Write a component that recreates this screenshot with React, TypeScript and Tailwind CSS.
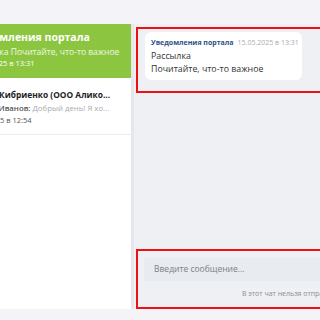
import React from "react";

const font = { fontFamily: '"Open Sans", "Noto Sans", sans-serif' };

function ChatItem({
  active,
  title,
  author,
  text,
  date,
}: {
  active?: boolean;
  title: string;
  author?: string;
  text: string;
  date: string;
}) {
  return (
    <div
      className={
        active
          ? "h-[54px] bg-[#8cc640] pl-[10px] pt-[6px]"
          : "h-[57px] border-b border-[#ececef] bg-white pl-[10px] pt-[9px]"
      }
    >
      <div
        className={
          "whitespace-nowrap font-bold leading-[15px] " +
          (active ? "text-[10.5px] text-white" : "ml-[9px] text-[8.4px] text-[#222]")
        }
      >
        {title}
      </div>
      <div
        className={
          "whitespace-nowrap leading-[13px] " +
          (active ? "ml-[4px] text-[8.5px]" : "ml-[10px] text-[7.8px]")
        }
      >
        {author ? (
          <span className="font-semibold text-[#555]">{author}: </span>
        ) : null}
        <span className={active ? "text-white/85" : "text-[#a9abb0]"}>{text}</span>
      </div>
      <div
        className={
          "whitespace-nowrap text-[7.5px] leading-[11px] " +
          (active ? "ml-[3px] text-white" : "ml-[0px] text-[#555]")
        }
      >
        {date}
      </div>
    </div>
  );
}

export default function App() {
  return (
    <div className="h-[320px] w-[320px] overflow-hidden bg-[#f3f3f8] pt-[24px]" style={font}>
      <div className="-ml-[44px] flex h-[285px] w-[420px]">
        {/* chat list */}
        <div className="w-[178px] shrink-0 overflow-hidden border-r-[3px] border-[#e6e6eb] bg-white">
          <ChatItem
            active
            title="Уведомления портала"
            text="Рассылка Почитайте, что-то важное"
            date="15.05.2025 в 13:31"
          />
          <ChatItem
            title="Анна Кибриенко (ООО Алико..."
            author="Иван Иванов"
            text="Добрый день! Я хо..."
            date="15.05.2025 в 12:54"
          />
        </div>

        {/* conversation */}
        <div className="flex flex-1 flex-col bg-[#eff0f4] pl-[2px] pt-[3px]">
          <div className="h-[66px] border-2 border-[#f01010] pl-[7px] pt-[3px]">
            <div className="h-[48px] w-[157px] rounded-[6px] bg-white px-[6px] pt-[6px]">
              <div className="flex items-baseline gap-[4px] whitespace-nowrap leading-[10px]">
                <span className="text-[7px] font-bold text-[#2f4f8a]">Уведомления портала</span>
                <span className="text-[7px] text-[#a9acb3]">15.05.2025 в 13:31</span>
              </div>
              <div className="mt-[2px] text-[8.8px] leading-[13px] text-[#333]">
                <div>Рассылка</div>
                <div>Почитайте, что-то важное</div>
              </div>
            </div>
          </div>

          <div className="flex-1" />

          <div className="h-[60px] border-2 border-[#f01010] pl-[6px] pt-[7px]">
            <div className="flex h-[23px] items-center bg-[#e8ebef] pl-[10px] text-[8.5px] text-[#7b8088]">
              Введите сообщение...
            </div>
            <div className="mt-[8px] whitespace-nowrap pl-[98px] text-[7px] leading-[10px] text-[#8a8d93]">
              В этот чат нельзя отправлять сообщения
            </div>
          </div>
        </div>
      </div>
    </div>
  );
}
